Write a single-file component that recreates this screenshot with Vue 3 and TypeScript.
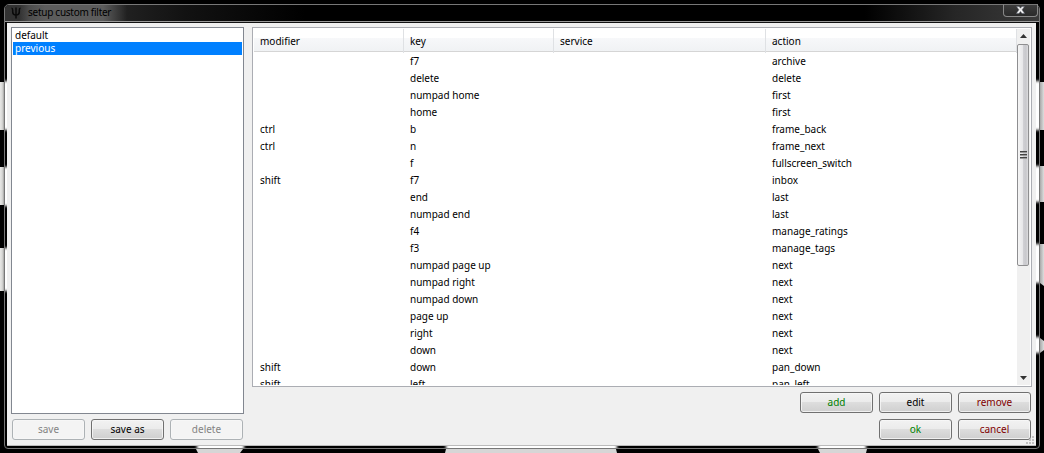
<script setup lang="ts">
interface Shortcut { modifier: string; key: string; action: string }

const filters: string[] = ['default', 'previous']
const selected = 'previous'

const rows: Shortcut[] = [
  ['', 'f7', 'archive'],
  ['', 'delete', 'delete'],
  ['', 'numpad home', 'first'],
  ['', 'home', 'first'],
  ['ctrl', 'b', 'frame_back'],
  ['ctrl', 'n', 'frame_next'],
  ['', 'f', 'fullscreen_switch'],
  ['shift', 'f7', 'inbox'],
  ['', 'end', 'last'],
  ['', 'numpad end', 'last'],
  ['', 'f4', 'manage_ratings'],
  ['', 'f3', 'manage_tags'],
  ['', 'numpad page up', 'next'],
  ['', 'numpad right', 'next'],
  ['', 'numpad down', 'next'],
  ['', 'page up', 'next'],
  ['', 'right', 'next'],
  ['', 'down', 'next'],
  ['shift', 'down', 'pan_down'],
  ['shift', 'left', 'pan_left'],
].map(([modifier, key, action]) => ({ modifier, key, action }))
</script>

<template>
  <div class="desktop">
    <svg class="backdrop" width="1044" height="453" viewBox="0 0 1044 453">
      <defs>
        <filter id="soft" filterUnits="userSpaceOnUse" x="0" y="0" width="1044" height="453"><feGaussianBlur stdDeviation="0 1.5" /></filter>
        <filter id="softx" filterUnits="userSpaceOnUse" x="0" y="0" width="1044" height="453"><feGaussianBlur stdDeviation="1.8 0" /></filter>
        <linearGradient id="sideL"><stop offset="0" stop-color="#e8e8e6" /><stop offset=".55" stop-color="#d8d8d6" /><stop offset="1" stop-color="#a4a4a2" /></linearGradient>
        <linearGradient id="sideR"><stop offset="0" stop-color="#a8a8a8" /><stop offset="1" stop-color="#dedede" /></linearGradient>
      </defs>
      <g fill="url(#sideL)">
        <rect x="0" y="82" width="4" height="48" /><rect x="0" y="167" width="4" height="38" /><rect x="0" y="248" width="4" height="43" />
      </g>
      <g fill="url(#sideR)">
        <rect x="1040" y="82" width="4" height="48" /><rect x="1040" y="166" width="4" height="36" /><path d="M1040 244h4v42l-4-3z" /><path d="M1040 338l4 3v9l-4 3z" />
      </g>
      <g fill="#fff" filter="url(#soft)">
        <rect x="4" y="81" width="3" height="49" /><rect x="4" y="167" width="3" height="39" /><rect x="4" y="248" width="3" height="43" />
        <rect x="1036" y="81" width="3" height="49" /><rect x="1036" y="166" width="3" height="36" /><rect x="1036" y="244" width="3" height="39" /><rect x="1036" y="337" width="3" height="16" />
      </g>
      <g fill="#fff" filter="url(#softx)">
        <rect x="197" y="445" width="47" height="4" /><rect x="446" y="445" width="171" height="4" /><rect x="818" y="445" width="48" height="4" />
      </g>
      <g fill="#d6d6d6">
        <path d="M196 449h47l-3 4h-42z" /><path d="M446 449h170l1 4h-172z" /><path d="M818 449h49l-1 4h-46z" />
      </g>
    </svg>

    <section class="window">
      <header class="titlebar">
        <svg class="psi" width="12" height="12" viewBox="0 0 12 12">
          <path d="M1.500 1.200c1 0 1.200.6 1.200 2v1.800c0 2 1 3 3.300 3s3.300-1 3.300-3V3.200c0-1.400.2-2 1.200-2M6 .5v11" fill="none" stroke="#0a0a0a" stroke-width="1.500" />
        </svg>
        <span class="caption">setup custom filter</span>
        <button class="close" aria-label="close">
          <svg width="9" height="8" viewBox="0 0 9 8">
            <path d="M.5.500h2.600l1.400 1.700L5.900.500h2.600L6.100 3.800l2.600 3.700H6L4.500 5.500 3 7.500H.3l2.600-3.700z" fill="#f0f0f0" stroke="#555b68" stroke-width=".5" />
          </svg>
        </button>
      </header>

      <main class="client">
        <div class="left">
          <ul class="list">
            <li v-for="name in filters" :key="name" :class="{ on: name === selected }">{{ name }}</li>
          </ul>
          <div class="buttons">
            <button class="btn" disabled>save</button>
            <button class="btn">save as</button>
            <button class="btn" disabled>delete</button>
          </div>
        </div>

        <div class="right">
          <div class="table">
            <div class="grid">
              <div class="row head">
                <span>modifier</span><span>key</span><span>service</span><span>action</span>
              </div>
              <div class="rows">
                <div v-for="(r, i) in rows" :key="i" class="row">
                  <span>{{ r.modifier }}</span><span>{{ r.key }}</span><span></span><span>{{ r.action }}</span>
                </div>
              </div>
            </div>
            <div class="scroll">
              <svg class="arrow" width="7" height="4" viewBox="0 0 7 4"><path d="M0 4L3.500 0 7 4z" fill="#333" /></svg>
              <div class="thumb"><i></i><i></i><i></i></div>
              <svg class="arrow end" width="7" height="4" viewBox="0 0 7 4"><path d="M0 0h7L3.500 4z" fill="#333" /></svg>
            </div>
          </div>
          <div class="buttons first">
            <button class="btn green">add</button>
            <button class="btn">edit</button>
            <button class="btn red">remove</button>
          </div>
          <div class="buttons">
            <button class="btn green">ok</button>
            <button class="btn red">cancel</button>
          </div>
        </div>
        <svg class="grip" width="9" height="9" viewBox="0 0 9 9">
          <path d="M6 0h2v2H6zM3 3h2v2H3zM6 3h2v2H6zM0 6h2v2H0zM3 6h2v2H3zM6 6h2v2H6z" fill="#c0c0c0" />
        </svg>
      </main>
    </section>
  </div>
</template>

<style>
body { margin: 0; background: #000; overflow: hidden; }
</style>

<style scoped>
* { box-sizing: border-box; }
.desktop {
  position: relative;
  width: 1044px;
  height: 453px;
  padding: 4px;
  background: #000;
  overflow: hidden;
  font: 10px/17px "Noto Sans", "Open Sans", sans-serif;
  color: #000;
}
.backdrop { position: absolute; left: 0; top: 0; }
.window {
  position: relative;
  width: 1036px;
  height: 445px;
  padding: 0 2px;
  border: 1px solid #777;
  border-radius: 5px 5px 4px 4px;
}
.titlebar {
  display: flex;
  height: 17px;
  margin: 0 -2px;
  padding-left: 5px;
  border-radius: 4px 4px 0 0;
  border-bottom: 1px solid #999;
  background:
    linear-gradient(90deg, transparent 14px, #4c4c4c 24px, #5c5c5c 40px, #5c5c5c 98px, #444 108px, transparent 122px),
    linear-gradient(90deg, #333 0, #252525 100px, #121212 180px, #000 300px, #000 860px, #262626 950px, #3a3a3a 1034px);
}
.psi { margin: 2px 0 0; }
.caption { margin-left: 6px; line-height: 15px; letter-spacing: -.27px; white-space: nowrap; }
.close {
  display: flex;
  align-items: center;
  justify-content: center;
  width: 35px;
  height: 13px;
  margin: -1px 1px 0 auto;
  padding: 0 0 1px;
  border: 1px solid #888;
  border-top-color: #777;
  border-radius: 0 0 4px 4px;
  background: linear-gradient(#3c3c3c, #2a2a2a);
}
.client {
  position: relative;
  display: flex;
  gap: 8px;
  width: 1029px;
  height: 424px;
  padding: 4px 4px 0;
  border-top: 1px solid #111;
  border-bottom: 1px solid #bbb;
  background: #f0f0f0;
}
.left { width: 233px; }
.list {
  height: 387px;
  margin: 0;
  padding: 1px;
  border: 1px solid #828790;
  background: #fff;
  list-style: none;
}
.list li { height: 13px; padding-left: 2px; line-height: 13px; }
.list li.on { background: #0080ff; color: #fff; }
.buttons { display: flex; gap: 6px; margin: 5px 0 0 1px; }
.right { width: 780px; }
.right .buttons { justify-content: flex-end; margin: 6px 1px 0 0; }
.right .buttons.first { margin-top: 5px; }
.btn {
  width: 73px;
  height: 21px;
  padding: 0;
  border: 1px solid #707070;
  border-radius: 3px;
  background: linear-gradient(#f2f2f2, #ebebeb 48%, #ddd 50%, #cfcfcf);
  box-shadow: inset 0 0 0 1px #f8f8f8cc;
  font: inherit;
  line-height: 17px;
  color: #000;
}
.btn:disabled { border-color: #adb2b5; background: #f4f4f4; color: #838383; }
.btn.green { color: #008000; }
.btn.red { color: #800000; }
.table {
  display: flex;
  height: 360px;
  padding: 1px;
  border: 1px solid #abadb3;
  background: #fff;
  overflow: hidden;
}
.grid { width: 763px; height: 356px; overflow: hidden; }
.row { display: grid; grid-template-columns: 150px 150px 212px 1fr; height: 17px; white-space: nowrap; }
.row span { padding-left: 6px; }
.head {
  height: 23px;
  line-height: 24px;
  border-bottom: 1px solid #d5d5d5;
  background: linear-gradient(#fff 0 39%, #f7f8fa 40%, #f0f2f4);
}
.head span { border-right: 1px solid #dfe1e4; }
.rows { padding-top: 1px; }
.scroll {
  display: flex;
  flex-direction: column;
  align-items: center;
  width: 13px;
  height: 356px;
  background: #f0f0f0;
}
.arrow { margin: 5px 0 6px; flex: none; }
.arrow.end { margin: auto 0 5px; }
.thumb {
  display: flex;
  flex-direction: column;
  gap: 1px;
  align-items: center;
  justify-content: center;
  align-self: flex-start;
  width: 12px;
  height: 222px;
  border: 1px solid #8e8e90;
  border-radius: 2px;
  background: linear-gradient(90deg, #f5f5f5, #e8e8ea 45%, #d0d0d4 55%, #c8c8cc 80%, #dedee0);
}
.thumb i { width: 7px; height: 2px; border-top: 1px solid #444; border-bottom: 1px solid #999; }
.grip { position: absolute; right: 1px; bottom: 0; }
</style>
